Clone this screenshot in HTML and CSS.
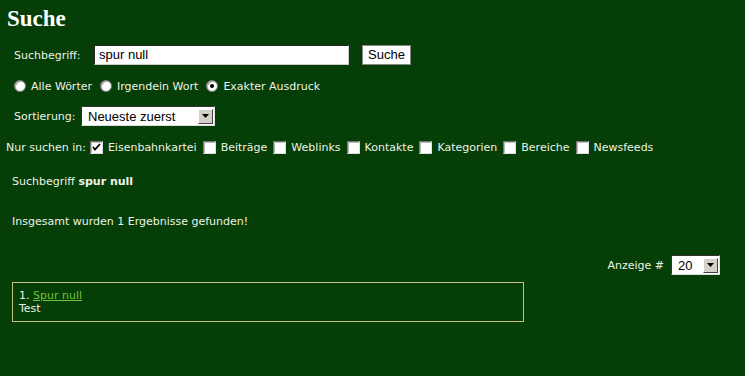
FILE: index.html
```html
<!DOCTYPE html>
<html lang="de">
<head>
<meta charset="utf-8">
<title>Suche</title>
<link rel="stylesheet" href="styles.css">
</head>
<body>
<h1 class="title">Suche</h1>
<div class="row row-search">
  <span class="label">Suchbegriff:</span>
  <span class="input">spur null</span>
  <span class="button">Suche</span>
</div>
<div class="row row-radios">
  <span class="radio"></span><span class="opt">Alle Wörter</span>
  <span class="radio"></span><span class="opt">Irgendein Wort</span>
  <span class="radio checked"></span><span class="opt">Exakter Ausdruck</span>
</div>
<div class="row row-sort">
  <span class="label">Sortierung:</span>
  <span class="select sel-sort"><span class="sel-text">Neueste zuerst</span><span class="arrow"><svg width="7" height="4" viewBox="0 0 7 4"><path d="M0 0h7L3.5 4z" fill="#000"/></svg></span></span>
</div>
<div class="row row-areas">
  <span class="lead">Nur suchen in:</span>
  <span class="check checked"><svg width="9" height="9" viewBox="0 0 9 9"><path d="M1 4l2 2.5L8 1" stroke="#000" stroke-width="1.8" fill="none"/></svg></span><span class="opt">Eisenbahnkartei</span>
  <span class="check"></span><span class="opt">Beiträge</span>
  <span class="check"></span><span class="opt">Weblinks</span>
  <span class="check"></span><span class="opt">Kontakte</span>
  <span class="check"></span><span class="opt">Kategorien</span>
  <span class="check"></span><span class="opt">Bereiche</span>
  <span class="check"></span><span class="opt">Newsfeeds</span>
</div>
<p class="info info-term">Suchbegriff <b>spur null</b></p>
<p class="info info-count">Insgesamt wurden 1 Ergebnisse gefunden!</p>
<div class="limit-row">
  <span class="label">Anzeige #</span>
  <span class="select sel-limit"><span class="sel-text">20</span><span class="arrow"><svg width="7" height="4" viewBox="0 0 7 4"><path d="M0 0h7L3.5 4z" fill="#000"/></svg></span></span>
</div>
<div class="result">
  <div>1. <a href="#" class="res-link">Spur null</a></div>
  <div>Test</div>
</div>
</body>
</html>
```
FILE: styles.css
```css
html, body {
  margin: 0;
  padding: 0;
  background: #053e07;
  color: #eef3e6;
  font-family: "DejaVu Sans", Verdana, sans-serif;
  font-size: 11px;
  width: 745px;
  height: 376px;
  overflow: hidden;
}
.title {
  margin: 0;
  padding: 7px 0 0 7px;
  height: 32px;
  box-sizing: border-box;
  font-family: "Liberation Serif", "Times New Roman", serif;
  font-size: 23px;
  font-weight: bold;
  line-height: 23px;
  color: #ffffff;
}
.row {
  display: flex;
  align-items: center;
}
.row-search {
  height: 20px;
  margin-top: 13px;
  padding-left: 14px;
}
.row-search .label {
  width: 80px;
}
.input {
  box-sizing: border-box;
  width: 255px;
  height: 20px;
  background: #fff;
  color: #000;
  border: 1px solid #222;
  border-right-color: #ccc;
  border-bottom-color: #ccc;
  font-family: "Liberation Sans", Arial, sans-serif;
  font-size: 13px;
  line-height: 18px;
  padding-left: 4px;
  margin-right: 13px;
}
.button {
  box-sizing: border-box;
  width: 49px;
  height: 20px;
  background: #fff;
  color: #000;
  border: 1px solid #888;
  font-family: "Liberation Sans", Arial, sans-serif;
  font-size: 13px;
  line-height: 18px;
  text-align: center;
}
.row-radios {
  height: 20px;
  margin-top: 11px;
  padding-left: 14px;
}
.radio {
  box-sizing: border-box;
  width: 12px;
  height: 12px;
  border-radius: 50%;
  background: #fff;
  border: 1px solid #777;
  box-shadow: inset 1px 1px 0 #aaa;
  margin-right: 5px;
  position: relative;
}
.radio.checked::after {
  content: "";
  position: absolute;
  left: 3px;
  top: 3px;
  width: 4px;
  height: 4px;
  border-radius: 50%;
  background: #000;
}
.row-radios .opt {
  margin-right: 8px;
}
.row-sort {
  height: 20px;
  margin-top: 10px;
  padding-left: 14px;
}
.row-sort .label {
  width: 67px;
}
.select {
  box-sizing: border-box;
  height: 20px;
  background: #fff;
  color: #000;
  border: 1px solid #333;
  border-right-color: #ddd;
  border-bottom-color: #ddd;
  display: flex;
  align-items: center;
  justify-content: space-between;
  font-family: "Liberation Sans", Arial, sans-serif;
  font-size: 13px;
  padding: 0 1px 0 6px;
}
.sel-sort { width: 134px; }
.sel-limit { width: 49px; }
.arrow {
  box-sizing: border-box;
  width: 15px;
  height: 15px;
  background: #d4d0c8;
  border: 1px solid #fff;
  border-right-color: #404040;
  border-bottom-color: #404040;
  display: flex;
  align-items: center;
  justify-content: center;
}
.row-areas {
  height: 20px;
  margin-top: 11px;
  padding-left: 6px;
}
.lead {
  margin-right: 4px;
}
.row-areas .opt {
  margin-right: 6px;
}
.check {
  box-sizing: border-box;
  width: 13px;
  height: 13px;
  background: #fff;
  border: 1px solid #777;
  border-right-color: #ddd;
  border-bottom-color: #ddd;
  box-shadow: inset 1px 1px 0 #bbb;
  margin-right: 5px;
  display: flex;
  align-items: center;
  justify-content: center;
}
.info {
  margin: 0;
  padding-left: 12px;
}
.info-term {
  margin-top: 18px;
  height: 14px;
}
.info-count {
  margin-top: 26px;
  height: 14px;
}
.limit-row {
  display: flex;
  justify-content: flex-end;
  align-items: center;
  height: 20px;
  margin-top: 26px;
  padding-right: 25px;
}
.limit-row .label {
  margin-right: 7px;
}
.result {
  box-sizing: border-box;
  width: 512px;
  height: 40px;
  margin: 7px 0 0 12px;
  border: 1px solid #cbbd86;
  padding: 6px 6px;
  line-height: 13px;
}
.res-link {
  color: #72c23c;
  text-decoration: underline;
}
```
